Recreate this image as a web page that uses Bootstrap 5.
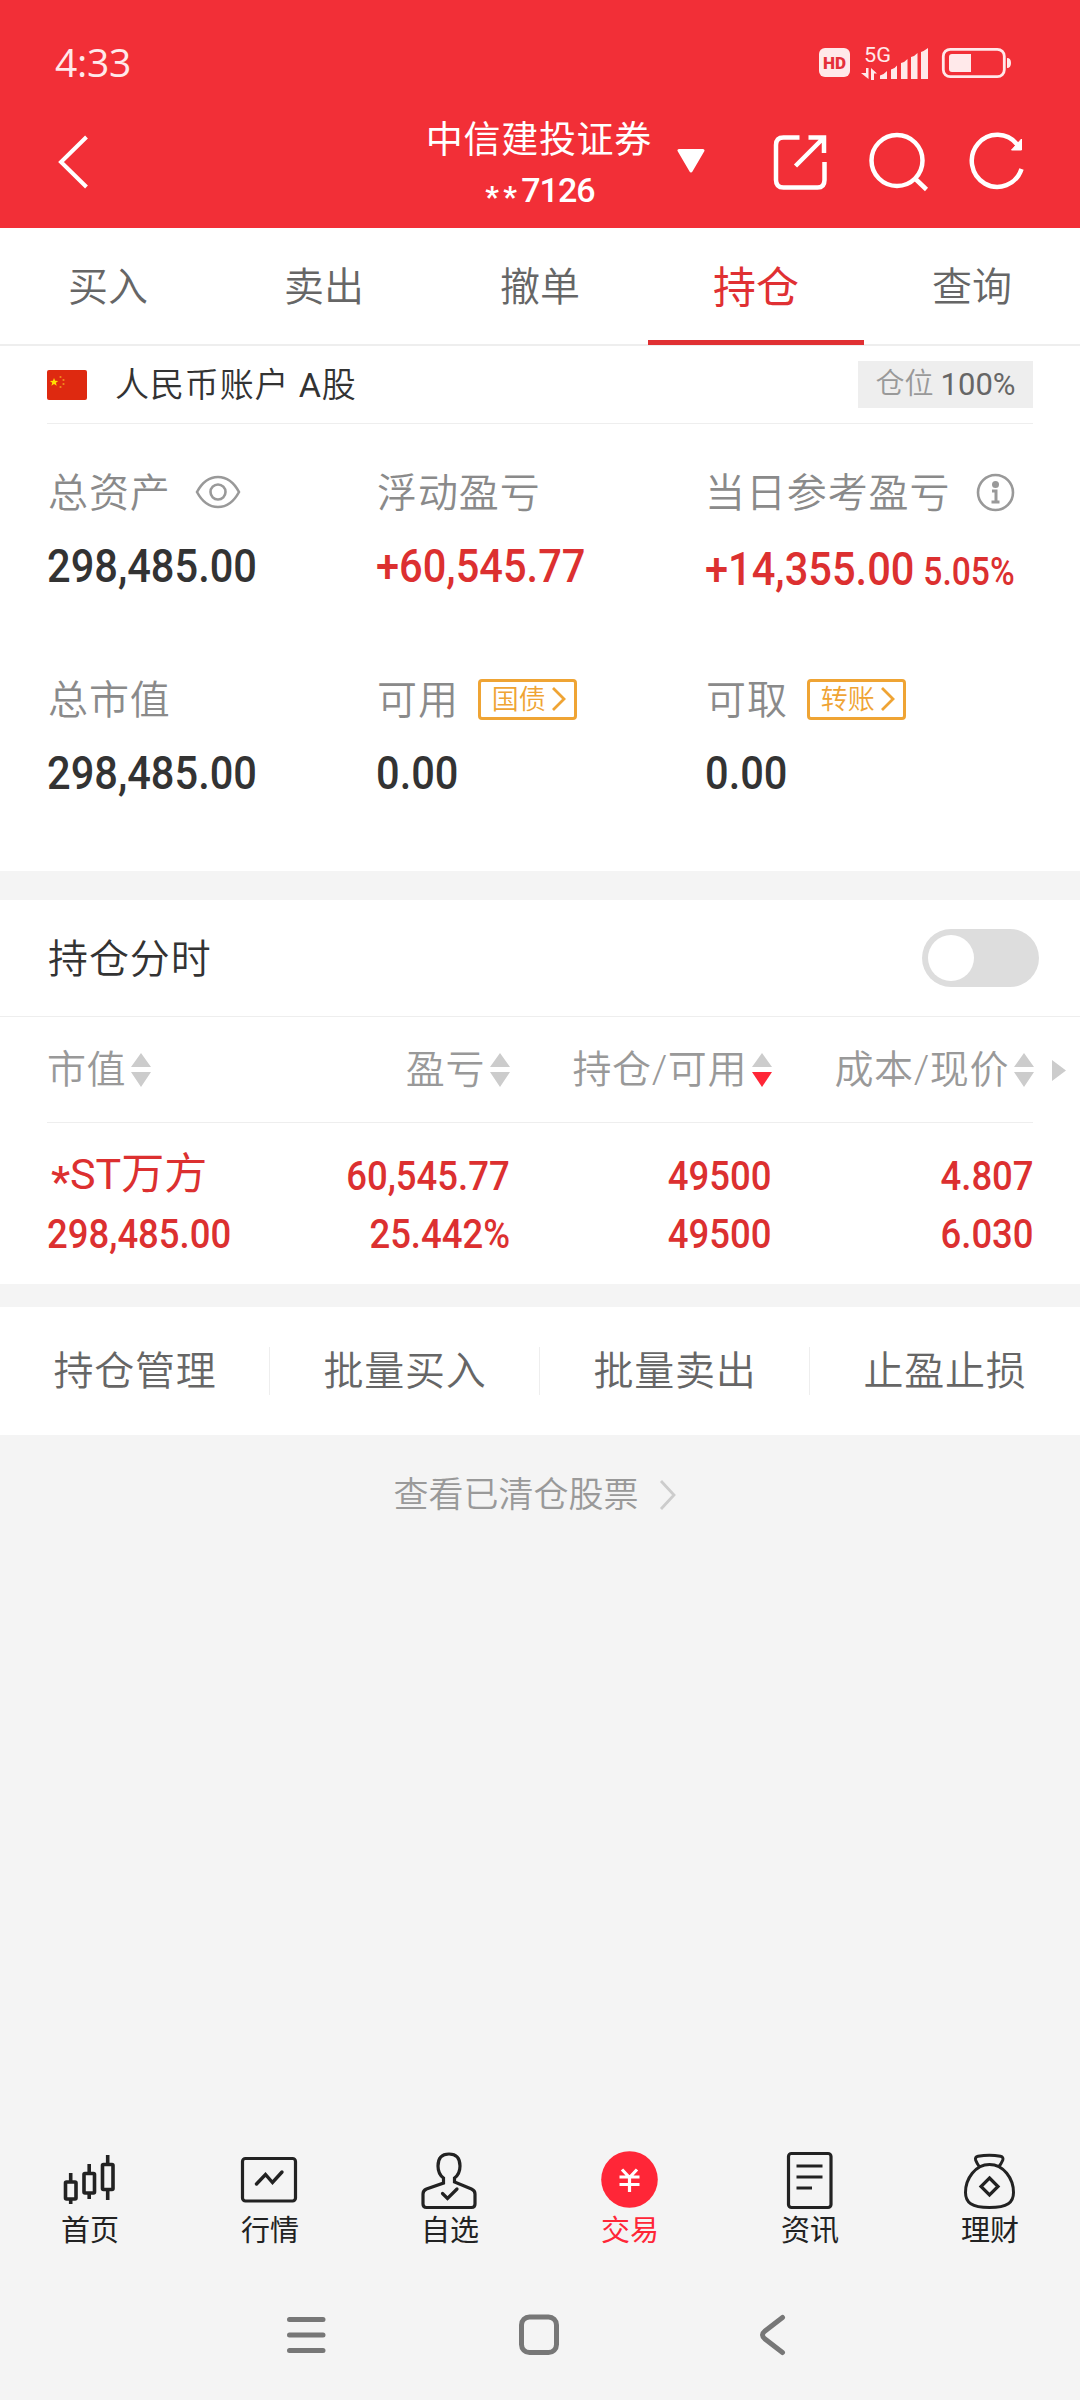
<!DOCTYPE html>
<html lang="zh-CN">
<head>
<meta charset="utf-8">
<meta name="viewport" content="width=device-width, initial-scale=1">
<title>持仓</title>
<link rel="stylesheet" href="https://cdn.jsdelivr.net/npm/bootstrap@5.3.0/dist/css/bootstrap.min.css">
<style>
body{background:#f4f4f4;font-family:Roboto,"Noto Sans CJK SC",sans-serif;font-size:40px;font-weight:350;line-height:1;color:#333;width:1080px;height:2400px;overflow:hidden;white-space:nowrap}
svg{display:block;flex:none}
.top{background:#f22f37;height:228px;color:#fff}
.status{height:94px;padding:32px 68px 0 55px;color:#ffe9ea}
.clock{font-size:39px;font-weight:500;font-family:"Open Sans","Noto Sans",sans-serif;display:inline-block;padding-bottom:4px;letter-spacing:-.3px}
.titlebar{height:134px;padding:0 54px 0 57px}
.brand{font-size:37px;letter-spacing:.7px;font-weight:400;margin-top:12px}
.acct{font-size:34px;font-weight:500;margin-top:14px;letter-spacing:-1px;padding-left:2px}
.acct .star{font-size:30px;width:18px;text-align:left;font-weight:700}
.star{display:inline-block;transform:translateY(.17em)}
.tabs{height:118px;border-bottom:2px solid #eee;color:#666}
.tabs a{width:216px;color:#666;text-decoration:none;padding-top:3px}
.tabs a.on{color:#e03033;font-size:43px;font-weight:400;box-shadow:inset 0 -5px #e03033;margin-bottom:-1px}
.hair{border-bottom:1px solid #eee}
.account{height:78px;margin:0 47px;font-size:34px;letter-spacing:.9px}
.latin{font-weight:400}
.pos{background:#eee;width:175px;height:47px;font-size:29px;color:#999;letter-spacing:0}
.pos b{font-weight:400;color:#666;font-size:31px}
.assets{height:447px;padding:47px 0 0 47px}
.cell{width:329px;height:207px;color:#8a8a8a}
.cell .lbl{height:42px;letter-spacing:.9px;padding:3px 0 0 1px}
.lbl>svg,.tag{margin-top:-3px}
.cell.l3{width:360px}
.cell.l3 .lbl{padding-left:0}
.num{font-size:47px;font-weight:500;color:#333;display:inline-block;transform:scaleX(.885);transform-origin:left}
.cell .num{margin-top:29px;height:47px}
.red,.red .num{color:#dc3030!important}
.tag{width:99px;height:41px;border:3px solid #efa434;border-radius:4px;color:#efa434;font-size:27px;letter-spacing:0;margin-left:19px;padding:2px 0 0 11px}
.tag svg{margin:-2px 0 0 5px}
.switchrow{height:117px;margin-top:29px;padding:0 41px 0 48px;letter-spacing:.9px}
.toggle{width:117px;height:58px;border-radius:29px;background:#ddd;padding:6px}
.toggle i{display:block;width:46px;height:46px;border-radius:50%;background:#fff}
.heads{height:106px;color:#999;font-size:39px;letter-spacing:.6px}
.heads svg{margin-left:5px}
.c1{width:222px}.c2{width:241px}.c3{width:262px}.c4{width:262px}
.stock{height:161px;padding:23px 0 0 47px}
.line{height:57px}
.stock .num{font-size:41px;transform:scaleX(.89);transform-origin:right;padding-top:4px}
.line+.line .num{padding-top:6px}
.stock .c1 .num{transform-origin:left}
.name{font-size:43px;font-weight:400}
.name .star{font-weight:500}
.actions{height:128px;margin-top:23px;color:#666}
.actions a{width:270px;color:#666;text-decoration:none;letter-spacing:.8px;padding-top:2px}
.actions a:not(:last-child){background:linear-gradient(#eee,#eee) 100% 50%/1px 48px no-repeat}
.cleared{height:118px;font-size:35px;color:#999;gap:20px;padding:2px 10px 0 0}
.dock{margin-top:592px;height:120px}
.dock a{width:180px;color:#222;text-decoration:none;font-size:29px;font-weight:400}
.dock a.on{color:#ff2637}
.dock svg{margin-bottom:4px}
.sys{height:135px;padding-top:5px}
</style>
<script src="https://cdn.jsdelivr.net/npm/bootstrap@5.3.0/dist/js/bootstrap.bundle.min.js"></script>
</head>
<body>
<header class="top">
  <div class="status d-flex justify-content-between align-items-center">
    <span class="clock">4:33</span>
    <svg width="194" height="52" viewBox="819 37 194 52" fill="#ffe9ea">
      <rect x="820" y="48" width="31" height="29" rx="6"/>
      <text x="835.500" y="68.500" text-anchor="middle" font-family="Roboto" font-weight="900" font-size="17" textLength="23" lengthAdjust="spacingAndGlyphs" fill="#e5303a">HD</text>
      <text x="865" y="61.500" font-family="Roboto" font-weight="400" font-size="21" textLength="27" lengthAdjust="spacingAndGlyphs">5G</text>
      <path d="M867 68h2.500v11l-7.500-6h5zM872 80V68l6 5.500h-3v6.500z"/>
      <path d="M881 79v-3.500q4-1 7-4.500V79zM892 79v-9.500q4-1 6-4V79zM902 79V63q4-1 6.500-4V79zM912 79V57q4-1 6.500-4V79zM922 79V52q3-1 7-4V79z"/>
      <rect x="944.300" y="49.300" width="61" height="27.400" rx="7" fill="none" stroke="#ffe9ea" stroke-width="2.800"/>
      <path d="M953 54h19v18h-19q-3 0-3-3V57q0-3 3-3zM1008 58q4 0 4 5t-4 5z"/>
    </svg>
  </div>
  <div class="titlebar d-flex align-items-start">
    <svg style="margin-top:38px" width="32" height="60" viewBox="0 0 32 60" fill="none" stroke="#fff" stroke-width="4"><path d="M29.500 5 4 30l25.500 25"/></svg>
    <div class="d-flex align-items-center ms-auto" style="margin-top:16px">
      <div class="text-center"><div class="brand">中信建投证券</div><div class="acct"><span class="star">*</span><span class="star">*</span>7126</div></div>
    </div>
    <svg style="margin:55px 0 0 24px" width="30" height="24" viewBox="0 0 30 24"><path d="M3 1.500h24L15 22z" fill="#fff" stroke="#fff" stroke-width="3" stroke-linejoin="round"/></svg>
    <svg style="margin:37px 0 0 64px" width="256" height="64" viewBox="770.5 131 256 64" fill="none" stroke="#fff" stroke-width="4.500">
      <path d="M800 137.500h-16q-7.500 0-7.500 7.500v35q0 7.500 7.500 7.500h34q7 0 7-7.500v-18M809 137.500h15.500V153M824 138l-28 28"/>
      <circle cx="897.500" cy="160.500" r="25.500"/><path d="m916 179 11 10.500"/>
      <path d="M1018 145a25.500 26 0 1 0 4 24"/><path d="M1012 150h10v-11z" fill="#fff" stroke-width="1"/>
    </svg>
  </div>
</header>

<main>
  <nav class="tabs bg-white d-flex">
    <a class="d-flex align-items-center justify-content-center" href="#">买入</a>
    <a class="d-flex align-items-center justify-content-center" href="#">卖出</a>
    <a class="d-flex align-items-center justify-content-center" href="#">撤单</a>
    <a class="on d-flex align-items-center justify-content-center" href="#">持仓</a>
    <a class="d-flex align-items-center justify-content-center" href="#">查询</a>
  </nav>
  <section class="bg-white">
    <div class="account hair d-flex align-items-center">
      <svg width="40" height="30" viewBox="0 0 40 30"><rect width="40" height="30" rx="2" fill="#de2910"/><path d="m7 8 1.200 2.700 3 .2-2.300 1.900.8 2.900L7 14l-2.600 1.700.8-2.900-2.300-1.900 3-.2z" fill="#ffde00"/><g fill="#f28b1c"><circle cx="13.500" cy="7" r="1.100"/><circle cx="16.500" cy="10" r="1.100"/><circle cx="16.500" cy="14" r="1.100"/><circle cx="13.500" cy="17" r="1.100"/></g></svg>
      <span style="margin-left:28px">人民币账户 <span class="latin">A</span>股</span>
      <span class="pos ms-auto d-flex align-items-center justify-content-center">仓位&nbsp;<b>100%</b></span>
    </div>
    <div class="assets d-flex flex-wrap align-content-start">
      <div class="cell">
        <div class="lbl d-flex align-items-center">总资产
          <svg style="margin-left:24px" width="46" height="34" viewBox="0 0 46 34" fill="none" stroke="#999" stroke-width="2.600"><path d="M2 17Q10 2 23 2t21 15q-8 15-21 15T2 17z"/><circle cx="23" cy="17" r="7.500"/></svg>
        </div><span class="num">298,485.00</span>
      </div>
      <div class="cell"><div class="lbl d-flex align-items-center">浮动盈亏</div><span class="num red">+60,545.77</span></div>
      <div class="cell l3">
        <div class="lbl d-flex align-items-center">当日参考盈亏
          <svg style="margin-left:26px" width="39" height="39" viewBox="0 0 39 39" fill="none" stroke="#999" stroke-width="2.600"><circle cx="19.500" cy="19.500" r="17.500"/><circle cx="19.500" cy="11.500" r="3.500" fill="#999" stroke="none"/><path d="M16 18h4v11m-4.500 0h8" stroke-width="3"/></svg>
        </div><span class="num red" style="margin-top:32px">+14,355.00<span style="font-size:38px;margin-left:10px">5.05%</span></span>
      </div>
      <div class="cell"><div class="lbl d-flex align-items-center">总市值</div><span class="num">298,485.00</span></div>
      <div class="cell"><div class="lbl d-flex align-items-center">可用<span class="tag d-flex align-items-center">国债<svg width="16" height="26" viewBox="0 0 16 26" fill="none" stroke="#efa434" stroke-width="2.800"><path d="m2 2 11 11L2 24"/></svg></span></div><span class="num">0.00</span></div>
      <div class="cell"><div class="lbl d-flex align-items-center">可取<span class="tag d-flex align-items-center">转账<svg width="16" height="26" viewBox="0 0 16 26" fill="none" stroke="#efa434" stroke-width="2.800"><path d="m2 2 11 11L2 24"/></svg></span></div><span class="num">0.00</span></div>
    </div>
  </section>

  <section class="bg-white">
    <div class="switchrow hair d-flex align-items-center justify-content-between"><span class="pt-1">持仓分时</span><span class="toggle"><i></i></span></div>
    <div class="heads d-flex align-items-center" style="padding-left:47px">
      <div class="c1 d-flex align-items-center">市值<svg width="20" height="34" viewBox="0 0 20 34" fill="#ccc"><path d="m10 0 10 14H0zM0 19h20L10 34z"/></svg></div>
      <div class="c2 d-flex align-items-center justify-content-end">盈亏<svg width="20" height="34" viewBox="0 0 20 34" fill="#ccc"><path d="m10 0 10 14H0zM0 19h20L10 34z"/></svg></div>
      <div class="c3 d-flex align-items-center justify-content-end">持仓/可用<svg width="20" height="34" viewBox="0 0 20 34" fill="#ccc"><path d="m10 0 10 14H0z"/><path d="M0 19h20L10 34z" fill="#ff2637"/></svg></div>
      <div class="c4 d-flex align-items-center justify-content-end">成本/现价<svg width="20" height="34" viewBox="0 0 20 34" fill="#ccc"><path d="m10 0 10 14H0zM0 19h20L10 34z"/></svg></div>
      <svg style="margin-left:18px" width="14" height="21" viewBox="0 0 14 21"><path d="m0 0 14 10.500L0 21z" fill="#ccc"/></svg>
    </div>
    <div class="hair" style="margin:-1px 47px 0"></div>
    <div class="stock red">
      <div class="line d-flex align-items-center"><div class="c1 name ps-1"><span class="star">*</span>ST万方</div><div class="c2 text-end"><span class="num">60,545.77</span></div><div class="c3 text-end"><span class="num">49500</span></div><div class="c4 text-end"><span class="num">4.807</span></div></div>
      <div class="line d-flex align-items-center"><div class="c1"><span class="num">298,485.00</span></div><div class="c2 text-end"><span class="num">25.442%</span></div><div class="c3 text-end"><span class="num">49500</span></div><div class="c4 text-end"><span class="num">6.030</span></div></div>
    </div>
  </section>

  <section class="actions bg-white d-flex">
    <a class="d-flex align-items-center justify-content-center" href="#">持仓管理</a>
    <a class="d-flex align-items-center justify-content-center" href="#">批量买入</a>
    <a class="d-flex align-items-center justify-content-center" href="#">批量卖出</a>
    <a class="d-flex align-items-center justify-content-center" href="#">止盈止损</a>
  </section>
  <div class="cleared d-flex align-items-center justify-content-center">查看已清仓股票<svg width="18" height="32" viewBox="0 0 18 32" fill="none" stroke="#ccc" stroke-width="2.800"><path d="m2 2 13 14L2 30"/></svg></div>
</main>

<nav class="dock d-flex">
  <a class="d-flex flex-column align-items-center" href="#"><svg width="60" height="68" viewBox="60.5 2145 60 68" fill="none" stroke="#222" stroke-width="3.600"><rect x="66" y="2182" width="10.500" height="17" rx="1"/><rect x="84.500" y="2173.500" width="10.500" height="19.500" rx="1"/><rect x="103" y="2164.500" width="10.500" height="25" rx="1"/><path d="M71.200 2173v9m0 17v5M89.700 2164v9m0 20v6M108.200 2155v9m0 25v11"/></svg>首页</a>
  <a class="d-flex flex-column align-items-center" href="#"><svg width="60" height="68" viewBox="240.5 2145 60 68" fill="none" stroke="#222" stroke-width="3.200"><rect x="243" y="2158.500" width="53" height="42.500" rx="3"/><path d="m257 2184 9-9.500 7 8 9.500-10.500" stroke-width="3.400" stroke-linecap="round"/></svg>行情</a>
  <a class="d-flex flex-column align-items-center" href="#"><svg width="60" height="68" viewBox="420.5 2145 60 68" fill="none" stroke="#222" stroke-width="3.200"><path d="M444 2183v-5q-5.500-4-5.500-12 0-12 11-12t11 12q0 8-5.500 12v4l17 7q3.500 1.500 3.500 5v10q0 3.500-3.500 3.500h-45q-3.500 0-3.500-3.500v-10q0-3.500 3.500-5z"/><path d="m443 2193.500 5 5 9.500-9.500" stroke-linecap="round"/></svg>自选</a>
  <a class="on d-flex flex-column align-items-center" href="#"><svg width="60" height="68" viewBox="600 2145 60 68" fill="none"><circle cx="629.500" cy="2179.500" r="28.300" fill="#ff2637"/><path d="m622 2169.500 7.500 8 7.500-8M619.500 2177h20m-20 7.500h20m-10-8v15.500" stroke="#fff" stroke-width="3.200"/></svg>交易</a>
  <a class="d-flex flex-column align-items-center" href="#"><svg width="60" height="68" viewBox="780 2145 60 68" fill="none" stroke="#222" stroke-width="3.200"><rect x="788.500" y="2153.500" width="42.500" height="54" rx="3"/><path d="M796.500 2166h26m-26 11h26m-26 11h15.500"/></svg>资讯</a>
  <a class="d-flex flex-column align-items-center" href="#"><svg width="60" height="68" viewBox="960 2145 60 68" fill="none" stroke="#222" stroke-width="3"><path d="M979.500 2167q-2.500-3.500-3.800-6.800-1-3.200 2.300-3.900 11.500-2.300 22.500 0 3.300.7 2.200 3.900-1.500 3.700-4.200 6.800"/><path d="M989.500 2164.500c14 0 24 14 24 28 0 10-6 15-24 15s-24-5-24-15c0-14 10-28 24-28z"/><path d="m989.500 2178 8.500 8.500-8.500 8.500-8.500-8.500z" stroke-width="3.200"/></svg>理财</a>
</nav>
<div class="sys d-flex justify-content-center align-items-center">
  <svg width="516" height="46" viewBox="282 2312 516 46" fill="none" stroke="#777" stroke-width="5" stroke-linecap="round"><path d="M289.500 2319.500h33.500m-33.500 15.500h33.500m-33.500 15.500h33.500"/><rect x="521.500" y="2317" width="35" height="35.500" rx="8"/><path d="m782.500 2317.500-17.500 13.500q-5 4 0 8l17.500 13.500"/></svg>
</div>
</body>
</html>
